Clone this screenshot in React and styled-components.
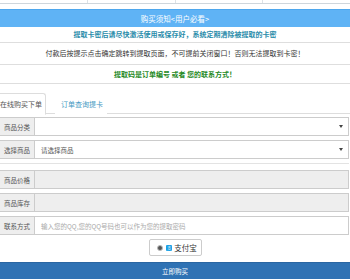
import React from "react";
import styled, { createGlobalStyle } from "styled-components";

const GlobalStyle = createGlobalStyle`
  html, body {
    margin: 0;
    padding: 0;
    background: #ffffff;
    overflow: hidden;
  }
  body {
    font-family: "Noto Sans CJK SC", "Liberation Sans", sans-serif;
    color: #333;
  }
`;

const Page = styled.div`
  width: 350px;
  height: 280px;
  overflow: hidden;
`;

const TopStrip = styled.div`
  display: flex;
  height: 3px;
  border-bottom: 1px solid #cfd6dc;
`;

const TopCell = styled.div`
  flex: 1;
  border-right: 1px solid #dde2e6;

  &:last-child {
    border-right: none;
  }
`;

const Notice = styled.div`
  margin-top: 5px;
`;

const NoticeHead = styled.div`
  height: 17px;
  line-height: 17px;
  background: #5fb3f5;
  border-top: 1px solid #4ea7ee;
  color: #ffffff;
  font-size: 7.5px;
  text-align: center;
`;

const NoticeRow = styled.div`
  height: ${(p) => p.$h}px;
  line-height: ${(p) => p.$h}px;
  border-bottom: 1px solid #dedede;
  color: ${(p) => p.$color};
  font-size: 7px;
  font-weight: ${(p) => (p.$bold ? 700 : 400)};
  text-align: center;
  white-space: nowrap;
`;

const TabList = styled.div`
  display: flex;
  margin-top: 9px;
  margin-left: -6px;
  border-bottom: 1px solid #dddddd;
  height: 20px;
`;

const Tab = styled.div`
  height: 20px;
  line-height: 20px;
  padding: 0 3px 0 5px;
  margin-bottom: -1px;
  margin-right: 9px;
  font-size: 7px;
  color: ${(p) => (p.$active ? "#555" : "#3f98c2")};
  background: #ffffff;
  border: 1px solid ${(p) => (p.$active ? "#dddddd" : "transparent")};
  border-bottom-color: ${(p) => (p.$active ? "#ffffff" : "transparent")};
  border-radius: 3px 3px 0 0;
  white-space: nowrap;
`;

const Form = styled.div`
  margin-top: 3px;
  margin-left: -1px;
  width: 350px;
`;

const Group = styled.div`
  display: flex;
  height: 19px;
  margin-bottom: 4px;
`;

const Addon = styled.div`
  width: 35px;
  flex-shrink: 0;
  display: flex;
  align-items: center;
  justify-content: center;
  background: #eeeeee;
  border: 1px solid #cccccc;
  border-right: none;
  box-sizing: border-box;
  font-size: 6.5px;
  color: #555;
`;

const Field = styled.div`
  flex: 1;
  display: flex;
  align-items: center;
  padding: 0 5px 0 6px;
  background: ${(p) => (p.$disabled ? "#eeeeee" : "#ffffff")};
  border: 1px solid #cccccc;
  box-sizing: border-box;
  font-size: 6.5px;
  color: ${(p) => (p.$placeholder ? "#aaaaaa" : "#555")};
  white-space: nowrap;
`;

const Caret = styled.span`
  margin-left: auto;
  width: 0;
  height: 0;
  border-left: 2px solid transparent;
  border-right: 2px solid transparent;
  border-top: 3px solid #444;
`;

const Divider = styled.div`
  margin: 1px 0 6px;
  border-top: 1px solid #e3e3e3;
  height: 0;
`;

const PayRow = styled.div`
  display: flex;
  justify-content: center;
  margin-top: 1px;
`;

const PayOption = styled.div`
  display: flex;
  align-items: center;
  gap: 2px;
  height: 17px;
  padding: 0 4px 0 7px;
  margin-left: 1px;
  border: 1px solid #cccccc;
  border-radius: 2px;
  box-sizing: border-box;
  font-size: 7.5px;
  color: #333;
`;

const Radio = styled.span`
  width: 4px;
  height: 4px;
  border-radius: 50%;
  background: #555;
  border: 1px solid #bbb;
  margin-right: 1px;
`;

const AliIcon = styled.span`
  width: 6px;
  height: 6px;
  border-radius: 1px;
  background: #1aa0e6;
  color: #fff;
  font-size: 4px;
  line-height: 6px;
  text-align: center;
`;

const BuyButton = styled.div`
  margin-top: 6px;
  height: 16px;
  line-height: 16px;
  background: #2f72b4;
  border-top: 1px solid #2a66a2;
  color: #ffffff;
  font-size: 6.5px;
  text-align: center;
`;

export default function App() {
  return (
    <Page>
      <GlobalStyle />
      <TopStrip>
        <TopCell />
        <TopCell />
        <TopCell />
        <TopCell />
      </TopStrip>

      <Notice>
        <NoticeHead>购买须知&lt;用户必看&gt;</NoticeHead>
        <NoticeRow $h={15} $color="#2a8caa" $bold>
          提取卡密后请尽快激活使用或保存好，系统定期清除被提取的卡密
        </NoticeRow>
        <NoticeRow $h={21} $color="#333333">
          付款后按提示点击确定跳转到提取页面，不可提前关闭窗口！否则无法提取到卡密！
        </NoticeRow>
        <NoticeRow $h={18} $color="#1f8a1f" $bold>
          提取码是订单编号 或者 您的联系方式！
        </NoticeRow>
      </Notice>

      <TabList>
        <Tab $active>在线购买下单</Tab>
        <Tab>订单查询提卡</Tab>
      </TabList>

      <Form>
        <Group>
          <Addon>商品分类</Addon>
          <Field>
            <Caret />
          </Field>
        </Group>
        <Group>
          <Addon>选择商品</Addon>
          <Field>
            请选择商品
            <Caret />
          </Field>
        </Group>
        <Divider />
        <Group>
          <Addon>商品价格</Addon>
          <Field $disabled />
        </Group>
        <Group>
          <Addon>商品库存</Addon>
          <Field $disabled />
        </Group>
        <Group>
          <Addon>联系方式</Addon>
          <Field $placeholder>输入您的QQ,您的QQ号码也可以作为您的提取密码</Field>
        </Group>
      </Form>

      <PayRow>
        <PayOption>
          <Radio />
          <AliIcon>支</AliIcon>
          支付宝
        </PayOption>
      </PayRow>

      <BuyButton>立即购买</BuyButton>
    </Page>
  );
}
